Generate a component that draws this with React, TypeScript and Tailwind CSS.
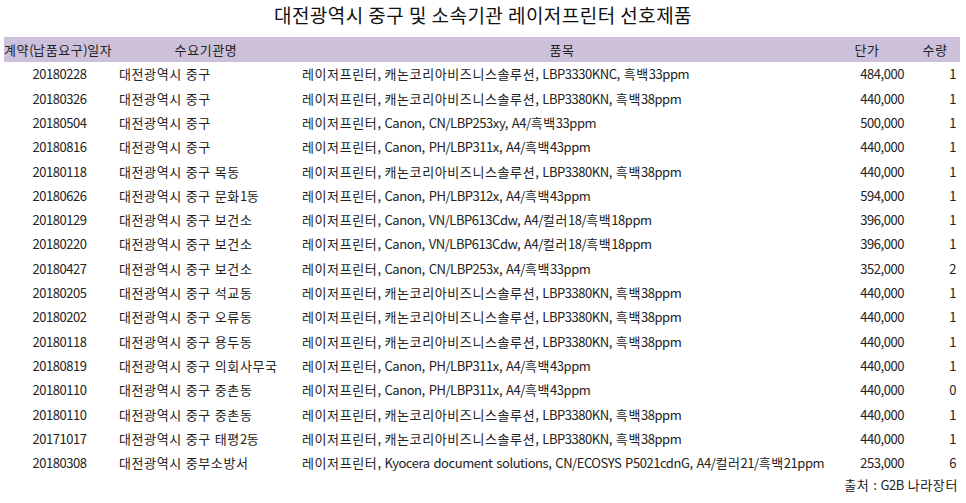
const ROWS = [
  ['20180228', '대전광역시 중구', '레이저프린터, 캐논코리아비즈니스솔루션, LBP3330KNC, 흑백33ppm', '484,000', '1'],
  ['20180326', '대전광역시 중구', '레이저프린터, 캐논코리아비즈니스솔루션, LBP3380KN, 흑백38ppm', '440,000', '1'],
  ['20180504', '대전광역시 중구', '레이저프린터, Canon, CN/LBP253xy, A4/흑백33ppm', '500,000', '1'],
  ['20180816', '대전광역시 중구', '레이저프린터, Canon, PH/LBP311x, A4/흑백43ppm', '440,000', '1'],
  ['20180118', '대전광역시 중구 목동', '레이저프린터, 캐논코리아비즈니스솔루션, LBP3380KN, 흑백38ppm', '440,000', '1'],
  ['20180626', '대전광역시 중구 문화1동', '레이저프린터, Canon, PH/LBP312x, A4/흑백43ppm', '594,000', '1'],
  ['20180129', '대전광역시 중구 보건소', '레이저프린터, Canon, VN/LBP613Cdw, A4/컬러18/흑백18ppm', '396,000', '1'],
  ['20180220', '대전광역시 중구 보건소', '레이저프린터, Canon, VN/LBP613Cdw, A4/컬러18/흑백18ppm', '396,000', '1'],
  ['20180427', '대전광역시 중구 보건소', '레이저프린터, Canon, CN/LBP253x, A4/흑백33ppm', '352,000', '2'],
  ['20180205', '대전광역시 중구 석교동', '레이저프린터, 캐논코리아비즈니스솔루션, LBP3380KN, 흑백38ppm', '440,000', '1'],
  ['20180202', '대전광역시 중구 오류동', '레이저프린터, 캐논코리아비즈니스솔루션, LBP3380KN, 흑백38ppm', '440,000', '1'],
  ['20180118', '대전광역시 중구 용두동', '레이저프린터, 캐논코리아비즈니스솔루션, LBP3380KN, 흑백38ppm', '440,000', '1'],
  ['20180819', '대전광역시 중구 의회사무국', '레이저프린터, Canon, PH/LBP311x, A4/흑백43ppm', '440,000', '1'],
  ['20180110', '대전광역시 중구 중촌동', '레이저프린터, Canon, PH/LBP311x, A4/흑백43ppm', '440,000', '0'],
  ['20180110', '대전광역시 중구 중촌동', '레이저프린터, 캐논코리아비즈니스솔루션, LBP3380KN, 흑백38ppm', '440,000', '1'],
  ['20171017', '대전광역시 중구 태평2동', '레이저프린터, 캐논코리아비즈니스솔루션, LBP3380KN, 흑백38ppm', '440,000', '1'],
  ['20180308', '대전광역시 중부소방서', '레이저프린터, Kyocera document solutions, CN/ECOSYS P5021cdnG, A4/컬러21/흑백21ppm', '253,000', '6'],
]

const COLS = 'grid grid-cols-[108px_188px_524px_86px_50px]'

// hangul in the original font runs a bit wider, latin a bit narrower, spaces wider
function K({ t }: { t: string }) {
  return (
    <>
      {t.split(/([\uAC00-\uD7A3]+| )/).map((s, i) => {
        if (!s) return null
        if (s === ' ') return <span key={i} className="tracking-[1px]"> </span>
        if (/[\uAC00-\uD7A3]/.test(s)) return <span key={i} className="tracking-[0.6px]">{s}</span>
        return <span key={i}>{s}</span>
      })}
    </>
  )
}

export default function App() {
  return (
    <div className="w-[966px] h-[503px] bg-white text-[#222] font-['Noto_Sans_CJK_KR',sans-serif] overflow-hidden tracking-[-0.45px]">
      <h1 className="pt-[2px] h-[37px] text-center text-[19px] leading-[26px] text-[#111] tracking-[0.45px]">
        대전광역시 중구 및 소속기관 레이저프린터 선호제품
      </h1>

      <div className="ml-[4px] w-[956px]">
        <div className={`${COLS} h-[25px] items-center bg-[#ccc0da] text-[13px] whitespace-nowrap`}>
          <div className="text-center"><K t="계약(납품요구)일자" /></div>
          <div className="text-center"><K t="수요기관명" /></div>
          <div className="text-center"><K t="품목" /></div>
          <div className="text-center"><K t="단가" /></div>
          <div className="text-center"><K t="수량" /></div>
        </div>

        {ROWS.map((r, i) => (
          <div key={i} className={`${COLS} h-[24.3px] items-center text-[13px] whitespace-nowrap`}>
            <div className="text-center pl-[3px]">{r[0]}</div>
            <div className="pl-[7px]"><K t={r[1]} /></div>
            <div className="pl-[2px]"><K t={r[2]} /></div>
            <div className="text-right pr-[6px]">{r[3]}</div>
            <div className="text-right pr-[4px]">{r[4]}</div>
          </div>
        ))}

        <div className="text-right pr-[2px] text-[13px] leading-[20px]"><K t="출처 : G2B 나라장터" /></div>
      </div>
    </div>
  )
}
